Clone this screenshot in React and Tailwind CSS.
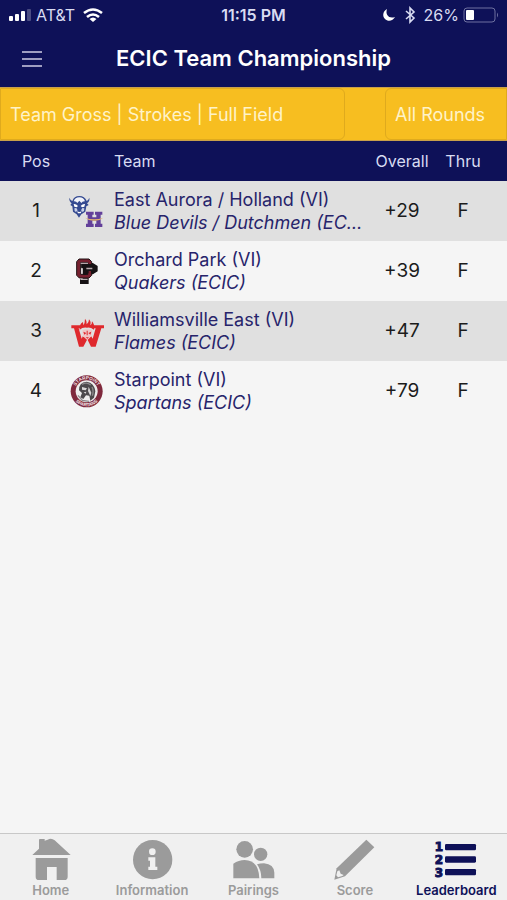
const filters = [
  { id: "format", label: "Leaderboard format", value: "Team Gross | Strokes | Full Field", style: "w-[345px] rounded-r-md" },
  { id: "round", label: "Round", value: "All Rounds", style: "w-[122px] rounded-l-md" },
];

const teams = [
  { pos: 1, name: "East Aurora / Holland (VI)", mascot: "Blue Devils / Dutchmen (ECIC)", overall: "+29", thru: "F", Logo: DevilsDutchmenLogo },
  { pos: 2, name: "Orchard Park (VI)", mascot: "Quakers (ECIC)", overall: "+39", thru: "F", Logo: QuakersLogo },
  { pos: 3, name: "Williamsville East (VI)", mascot: "Flames (ECIC)", overall: "+47", thru: "F", Logo: FlamesLogo },
  { pos: 4, name: "Starpoint (VI)", mascot: "Spartans (ECIC)", overall: "+79", thru: "F", Logo: SpartansLogo },
];

const tabs = [
  { label: "Home", href: "#home", Icon: HomeIcon },
  { label: "Information", href: "#information", Icon: InfoIcon },
  { label: "Pairings", href: "#pairings", Icon: PairingsIcon },
  { label: "Score", href: "#score", Icon: PencilIcon },
  { label: "Leaderboard", href: "#leaderboard", Icon: LeaderboardIcon, active: true },
];

/* Team logos */

function DevilsDutchmenLogo() {
  return (
    <svg viewBox="27 24 108 108" className="mx-auto size-9" aria-hidden="true">
      <path d="M28 38 Q27 49 35 55 L31 60 L37 64 L39 80 L50 88 L57 98 L64 88 L76 80 L79 64 L86 60 L81 55 Q90 49 88 38 Q85 46 80 48 Q74 33 58 33 Q42 33 37 48 Q31 46 28 38Z" fill="#354a91" />
      <path d="M41 49 Q45 37 58 37 Q71 37 75 49 Q67 48 64 54 L58 47 L52 54 Q49 48 41 49Z" fill="#f1f3fa" />
      <path d="M41 57 Q48 56 54 63 L50 67 L43 65Z M75 57 Q68 56 62 63 L66 67 L73 65Z" fill="#fff" />
      <path d="M43 70 L49 69 L53 76 L48 81 L44 78Z M73 70 L67 69 L63 76 L68 81 L72 78Z" fill="#c9d1e8" />
      <path d="M51 79 Q58 83 65 79 L62 85 H54Z" fill="#fff" />
      <path d="M78 80 H101 V89 H97 V97 H109 V89 H105 V80 H127 V89 H122 V116 H127 V126 H105 V116 H109 V107 H97 V116 H101 V126 H78 V116 H83 V89 H78Z" fill="#63409a" />
      <path d="M75 98 Q103 108 130 98 Q119 108 103 107 Q87 108 75 98Z" fill="#e2b26f" />
    </svg>
  );
}

function QuakersLogo() {
  return (
    <svg viewBox="27 24 108 108" className="mx-auto size-9" aria-hidden="true">
      <path d="M66 56 H98 L111 64 V78 L98 86 H82 V102 H84 V115 H62 V105 H70 V68 H66Z" fill="#161214" stroke="#161214" strokeWidth="4" />
      <path d="M57 42 H87 L95 50 V62 H84 V53 H62 V88 H84 V78 H95 V91 L87 99 H58 L50 91 V50Z" fill="#76202f" stroke="#211416" strokeWidth="3" />
      <path d="M64 57 H98 L110 65 V77 L98 84 H79 V90 H70 V68 H64Z" fill="#161214" />
      <path d="M62 53 H84 V57 H62Z M79 68 H97 V73 H79Z" fill="#b7a8ab" />
      <path d="M86 78 H93 V90 L87 96 H60 V90 H86Z" fill="#76202f" />
      <path d="M66 70 V86 M62 103 H83" stroke="#dbcfd2" strokeWidth="3" />
    </svg>
  );
}

function FlamesLogo() {
  return (
    <svg viewBox="27 24 108 108" className="mx-auto size-9" aria-hidden="true">
      <path d="M34 61 H61 V70 H56 L65 101 L74 82 H87 L98 101 L107 70 H102 V61 H132 V70 H124 L107 125 H93 L82 103 L70 125 H57 L42 70 H34Z" fill="#df292d" />
      <path d="M59 74 Q57 58 69 51 L70 61 Q75 55 75 41 Q82 48 80 58 Q87 53 87 43 Q95 51 90 61 Q97 58 96 49 Q106 61 102 74 Q91 66 81 68 Q68 66 59 74Z" fill="#df292d" />
      <path d="M67 76 Q81 69 96 76 L94 94 L82 106 L69 94Z" fill="#f1c7c7" />
      <path d="M70 80 L79 84 L73 89Z M94 80 L85 84 L91 89Z M77 97 H87 L82 101Z M80 77 H83 V91 H80Z" fill="#df292d" />
    </svg>
  );
}

function SpartansLogo() {
  return (
    <svg viewBox="27 24 108 108" className="mx-auto size-9" aria-hidden="true">
      <circle cx="80" cy="79" r="48" fill="#7f293d" />
      <path id="ring-top" d="M44 79 A36 36 0 0 1 116 79" fill="none" />
      <path id="ring-bottom" d="M35 79 A45 45 0 0 0 125 79" fill="none" />
      <text fill="#f3e6e8" className="font-['Liberation_Sans'] text-[14px] font-bold">
        <textPath href="#ring-top" startOffset="50%" textAnchor="middle">STARPOINT</textPath>
      </text>
      <text fill="#f3e6e8" className="font-['Liberation_Sans'] text-[14px] font-bold">
        <textPath href="#ring-bottom" startOffset="50%" textAnchor="middle">SPARTANS</textPath>
      </text>
      <circle cx="80" cy="79" r="33" fill="#eeeded" />
      <path d="M57 76 Q56 52 80 50 Q103 54 106 79 L102 98 L91 107 L88 92 L78 91 L70 102 L61 97 L66 84Z" fill="#4c494c" />
      <path d="M66 66 L81 70 L77 76 L66 74Z M86 65 L94 83 L91 93 L84 78Z M71 82 L79 80 L77 86Z" fill="#d9d7d8" />
      <path d="M66 58 Q80 50 92 60 M96 66 Q102 78 97 92 M54 91 L67 106 L87 109" fill="none" stroke="#8d898c" strokeWidth="4" />
    </svg>
  );
}

/* Tab bar icons */

function HomeIcon() {
  return (
    <svg viewBox="87 36 132 132" className="size-11" fill="currentColor" aria-hidden="true">
      <path d="M97 90 L117 71 V44 Q117 42 120 42 H134 V47 L143 44 Q154 38 164 46 L212 90Z" />
      <path d="M107 99 H203 V155 Q203 165 193 165 H170 V126 H141 V165 H117 Q107 165 107 155Z" />
    </svg>
  );
}

function InfoIcon() {
  return (
    <svg viewBox="390 36 132 132" className="size-11" fill="currentColor" aria-hidden="true">
      <circle cx="458" cy="104" r="59" />
      <circle cx="457" cy="80" r="10" fill="#f0f0f0" />
      <path d="M445 97 H466 V125 H472 V135 H445 V125 H450 V107 H445Z" fill="#f0f0f0" />
    </svg>
  );
}

function PairingsIcon() {
  return (
    <svg viewBox="694 36 132 132" className="size-11" fill="currentColor" aria-hidden="true">
      <circle cx="735" cy="73" r="25" />
      <path d="M701 160 V116 Q717 105 735 105 Q777 106 779 160Z" />
      <circle cx="783" cy="88" r="20" />
      <path d="M772 118 Q781 115 793 115 Q823 118 824 143 V160 H785 Q785 136 772 118Z" />
    </svg>
  );
}

function PencilIcon() {
  return (
    <svg viewBox="240 36 132 132" className="size-11" fill="currentColor" aria-hidden="true">
      <path d="M340 44 L364 67 L276 154 L244 164 L251 130Z" />
      <path d="M253 139 L259 136 L263 146 L272 150 L268 153 L255 157 L250 151Z" fill="#f0f0f0" />
    </svg>
  );
}

function LeaderboardIcon() {
  return (
    <svg viewBox="544 36 132 132" className="size-11" fill="currentColor" aria-hidden="true">
      <g className="font-['DejaVu_Sans'] text-[36px] font-bold" stroke="currentColor" strokeWidth="3">
        <text x="546" y="79">1</text>
        <text x="546" y="117">2</text>
        <text x="546" y="155">3</text>
      </g>
      <rect x="577" y="57" width="93" height="19" rx="4" />
      <rect x="577" y="94" width="93" height="19" rx="4" />
      <rect x="577" y="132" width="93" height="19" rx="4" />
    </svg>
  );
}

function StatusBar() {
  return (
    <div className="grid h-[30px] grid-cols-[1fr_auto_1fr] items-center px-2 text-base text-[#d9dcf2]">
      <div className="flex items-center gap-1">
        <svg viewBox="0 0 24 14" className="h-[14px] w-6" fill="#fff" aria-hidden="true">
          <rect x="1" y="8" width="4" height="5" rx="1" />
          <rect x="7" y="6" width="4" height="7" rx="1" />
          <rect x="13" y="3" width="4" height="10" rx="1" />
          <rect x="19" y="1" width="4" height="12" rx="1" opacity=".25" />
        </svg>
        <span>AT&amp;T</span>
        <svg viewBox="0 0 20 14" className="ml-1 h-[14px] w-5" fill="none" stroke="#fff" strokeWidth="2.6" aria-hidden="true">
          <path d="M1 5 Q10 -2 19 5" />
          <path d="M4 9 Q10 4 16 9" />
          <path d="M6.5 11 Q10 8 13.5 11 L10 14Z" fill="#fff" stroke="none" />
        </svg>
      </div>
      <span className="font-semibold">11:15 PM</span>
      <div className="flex items-center justify-end gap-1">
        <svg viewBox="0 0 14 14" className="size-[14px]" fill="#fff" aria-hidden="true">
          <path d="M5 1 C3 7 7 11 13 9 C11 13 6 14 3 11 C0 8 1 3 5 1Z" />
        </svg>
        <svg viewBox="0 0 12 18" className="ml-1 h-[18px] w-3" fill="none" stroke="currentColor" strokeWidth="1.6" aria-hidden="true">
          <path d="M2 5 L10 12 L6 16 V2 L10 6 L2 13" />
        </svg>
        <span className="ml-1">26%</span>
        <svg viewBox="0 0 36 16" className="h-4 w-9" fill="none" aria-hidden="true">
          <rect x="1" y="1" width="31" height="14" rx="3" stroke="#6e71a0" />
          <rect x="3" y="3" width="8" height="10" rx="1" fill="#fff" />
          <path d="M34 5.5 Q36 8 34 10.5Z" fill="#6e71a0" />
        </svg>
      </div>
    </div>
  );
}

export default function App() {
  return (
    <div className="flex min-h-screen flex-col bg-[#f5f5f5] font-[Inter,sans-serif]">
      <header className="bg-[#0e1158] text-white">
        <StatusBar />
        <div className="grid h-[57px] grid-cols-[48px_1fr_48px] items-center px-2">
          <button type="button" aria-label="Open menu" className="flex justify-center">
            <svg viewBox="0 0 20 18" className="h-[18px] w-5" stroke="#d0cde4" strokeWidth="1.5" aria-hidden="true">
              <path d="M0 2 H20 M0 9 H20 M0 16 H20" />
            </svg>
          </button>
          <h1 className="text-center text-[22px] font-semibold">ECIC Team Championship</h1>
        </div>
      </header>

      {/* Filters */}
      <div className="flex h-[54px] justify-between border-y border-[#c9a04a] bg-[#f7be20]">
        {filters.map(({ id, label, value, style }) => (
          <select
            key={id}
            aria-label={label}
            className={`appearance-none border border-[#dfaa1d] bg-transparent px-[9px] text-[18px] text-[#fff3c8] ${style}`}
          >
            <option>{value}</option>
          </select>
        ))}
      </div>

      <main className="flex-1">
        <table className="w-full table-fixed border-collapse">
          <thead className="bg-[#0e1158] text-base text-[#d9dcf2]">
            <tr className="h-10">
              <th className="w-16 pl-2 font-normal">Pos</th>
              <th className="w-[46px]" aria-label="Logo" />
              <th className="pl-1 text-left font-normal">Team</th>
              <th className="w-[62px] font-normal">Overall</th>
              <th className="w-[74px] pr-[14px] font-normal">Thru</th>
            </tr>
          </thead>
          <tbody className="text-[19px] text-[#1c1c1c]">
            {teams.map(({ pos, name, mascot, overall, thru, Logo }) => (
              <tr key={pos} className="h-[60px] text-center odd:bg-[#e0e0e0]">
                <td className="pl-2">{pos}</td>
                <td>
                  <Logo />
                </td>
                <td className="pr-2 pl-1 text-left text-[18px] leading-[23px] text-[#27246b]">
                  <div className="truncate">{name}</div>
                  <div className="truncate italic">{mascot}</div>
                </td>
                <td>{overall}</td>
                <td className="pr-[14px]">{thru}</td>
              </tr>
            ))}
          </tbody>
        </table>
      </main>

      {/* Tab bar */}
      <nav className="grid h-[67px] grid-cols-5 border-t border-[#c8c8c8] bg-[#f0f0f0]">
        {tabs.map(({ label, href, Icon, active }) => (
          <a
            key={label}
            href={href}
            aria-current={active ? "page" : undefined}
            className={`flex flex-col items-center pt-[3px] text-[13px] leading-[18px] font-semibold ${
              active ? "text-[#0e1158]" : "text-[#9b9b9b]"
            }`}
          >
            <Icon />
            {label}
          </a>
        ))}
      </nav>
    </div>
  );
}
